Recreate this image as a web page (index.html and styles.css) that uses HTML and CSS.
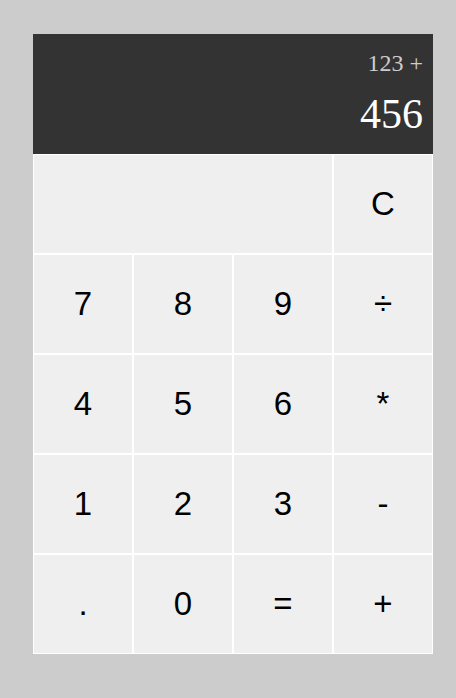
FILE: index.html
```html
<!DOCTYPE html>
<html lang="en">
<head>
  <meta charset="UTF-8">
  <meta name="viewport" content="width=device-width, initial-scale=1.0">
  <title>Calculator</title>
  <link rel="stylesheet" href="styles.css">
</head>
<body>
  <div class="calculator">
    <div class="output">
      <div class="previous">123 +</div>
      <div class="current">456</div>
    </div>
    <button class="span-three"></button>
    <button>C</button>
    <button>7</button>
    <button>8</button>
    <button>9</button>
    <button>÷</button>
    <button>4</button>
    <button>5</button>
    <button>6</button>
    <button>*</button>
    <button>1</button>
    <button>2</button>
    <button>3</button>
    <button>-</button>
    <button>.</button>
    <button>0</button>
    <button>=</button>
    <button>+</button>
  </div>
</body>
</html>
```

FILE: styles.css
```css
body {
  margin: 0;
  padding: 34px 0 0 33px;
  background-color: #ccc;
}
.calculator {
  display: grid;
  grid-template-columns: repeat(4, 100px);
  grid-template-rows: 120px repeat(5, 100px);
}
.calculator > button {
  box-sizing: border-box;
  font-family: "Liberation Sans", Arial, sans-serif;
  font-size: 33px;
  color: #000;
  border: 1px solid #fff;
  outline: none;
  padding: 0;
  background-color: #efefef;
  cursor: pointer;
}
.calculator > button:hover {
  background-color: #f7f7f7;
}
.span-three {
  grid-column: span 3;
}
.output {
  grid-column: 1 / -1;
  background-color: #333;
  display: flex;
  flex-direction: column;
  align-items: flex-end;
  justify-content: space-around;
  padding: 10px;
  font-family: "Liberation Serif", "Times New Roman", serif;
  word-wrap: break-word;
  word-break: break-all;
}
.previous {
  color: #ccc;
  font-size: 24px;
}
.current {
  color: #fff;
  font-size: 42px;
}
```
